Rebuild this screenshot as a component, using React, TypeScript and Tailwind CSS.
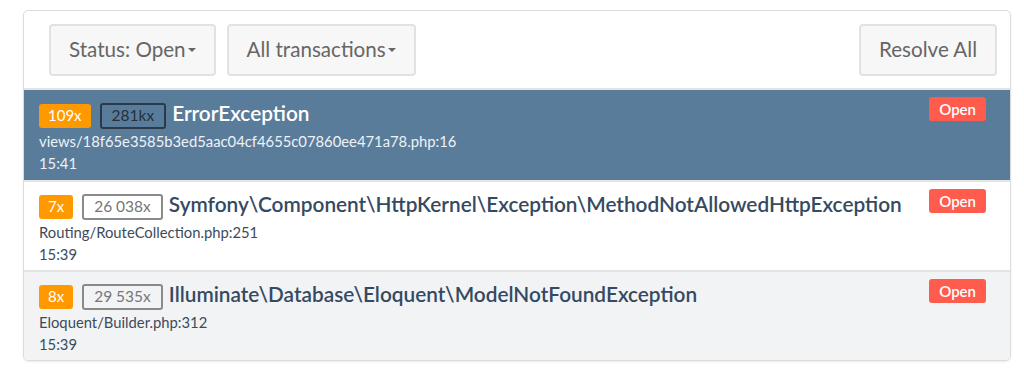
import React from 'react';

interface ErrorItem {
  count: string;
  total: string;
  title: string;
  file: string;
  time: string;
}

const items: ErrorItem[] = [
  {
    count: '109x',
    total: '281kx',
    title: 'ErrorException',
    file: 'views/18f65e3585b3ed5aac04cf4655c07860ee471a78.php:16',
    time: '15:41',
  },
  {
    count: '7x',
    total: '26 038x',
    title: 'Symfony\\Component\\HttpKernel\\Exception\\MethodNotAllowedHttpException',
    file: 'Routing/RouteCollection.php:251',
    time: '15:39',
  },
  {
    count: '8x',
    total: '29 535x',
    title: 'Illuminate\\Database\\Eloquent\\ModelNotFoundException',
    file: 'Eloquent/Builder.php:312',
    time: '15:39',
  },
];

const Caret = () => (
  <span className="inline-block ml-0.5 mb-[3px] w-0 h-0 border-x-[4px] border-x-transparent border-t-[4px] border-t-[#666] align-middle" />
);

const ToolButton: React.FC<{ children: React.ReactNode }> = ({ children }) => (
  <button className="h-[52px] px-[18px] bg-[#f7f7f7] border-2 border-[#e2e2e2] rounded-[4px] text-[20.6px] text-[#666] leading-none">
    {children}
  </button>
);

const App: React.FC = () => {
  return (
    <div className="w-[1024px] h-[380px] bg-white pt-[10px] pl-[23px]" style={{ fontFamily: 'Lato, "Open Sans", sans-serif' }}>
      <div className="w-[988px] border border-[#dcdcdc] rounded-[5px] overflow-hidden shadow-[0_1px_2px_rgba(0,0,0,0.08)]">
        {/* Toolbar */}
        <div className="flex items-center justify-between pl-[25px] pr-[13px] h-[79px] border-b-2 border-[#e4e4e4]">
          <div className="flex gap-[11px]">
            <ToolButton>
              Status: Open<Caret />
            </ToolButton>
            <ToolButton>
              All transactions<Caret />
            </ToolButton>
          </div>
          <ToolButton>Resolve All</ToolButton>
        </div>

        {/* Errors */}
        {items.map((item, i) => {
          const active = i === 0;
          const rowBg = active ? 'bg-[#5a7c9b]' : i === 2 ? 'bg-[#f2f3f5]' : 'bg-white';
          return (
            <div
              key={i}
              className={`flex justify-between pl-[15px] pr-[24px] h-[90px] ${rowBg} ${i > 0 ? 'border-t-2 border-[#e4e4e4]' : ''}`}
            >
              <div className={i === 0 ? 'pt-[12px]' : 'pt-[11px]'}>
                <div className="flex items-center gap-[9px] h-[27px]">
                  <span className="h-[24px] px-[9px] flex items-center rounded-[3px] bg-[#ff9900] text-white text-[15px]">
                    {item.count}
                  </span>
                  <span
                    className={`h-[26px] px-[10px] flex items-center rounded-[3px] border-2 text-[15.5px] ${
                      active ? 'border-[#2a3a4a] text-[#24303c]' : 'border-[#8a8a8a] text-[#777]'
                    }`}
                  >
                    {item.total}
                  </span>
                  <span
                    className={`-ml-[3px] text-[20.8px] leading-none font-semibold mb-[4px] ${active ? 'text-white' : 'text-[#344a62]'}`}
                  >
                    {item.title}
                  </span>
                </div>
                <div className={`mt-[1px] text-[14.8px] leading-[22px] ${active ? 'text-[#eef2f6]' : 'text-[#3c4b5a]'}`}>
                  {item.file}
                </div>
                <div className={`text-[14.8px] leading-[22px] ${active ? 'text-[#eef2f6]' : 'text-[#3c4b5a]'}`}>
                  {item.time}
                </div>
              </div>
              <div className="pt-[7px]">
                <span className="h-[24px] px-[10px] flex items-center rounded-[3px] bg-[#ff5c4d] text-white text-[15px] font-semibold">
                  Open
                </span>
              </div>
            </div>
          );
        })}
      </div>
    </div>
  );
};

export default App;
